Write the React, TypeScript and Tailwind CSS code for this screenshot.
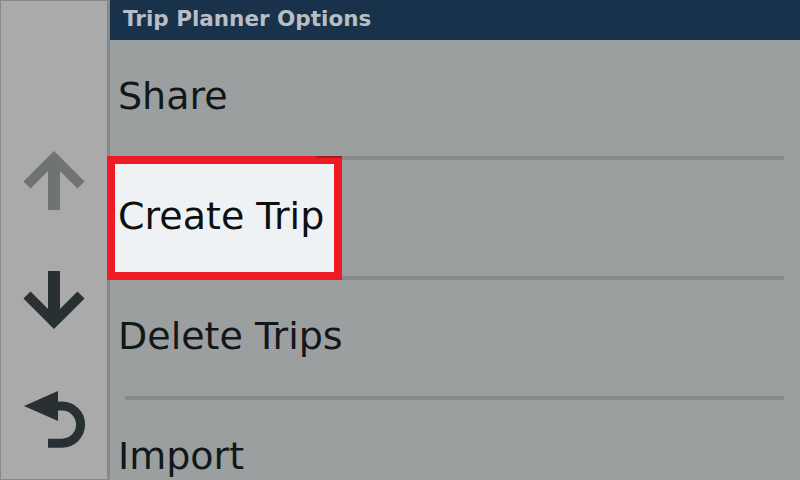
import React from "react";

// --- Sidebar icons (viewBox matches one 120px sidebar row) ---
const UpArrow = () => (
  <svg width="106" height="120" viewBox="1 0 106 120">
    <path d="M27 64 L54 37 L81 64" fill="none" stroke="#6f7372" strokeWidth={10} strokeLinejoin="miter" />
    <path d="M54 40 L54 89" stroke="#6f7372" strokeWidth={12} />
  </svg>
);

const DownArrow = () => (
  <svg width="106" height="120" viewBox="1 0 106 120">
    <path d="M54 30 L54 78" stroke="#283033" strokeWidth={12} />
    <path d="M27 54 L54 81 L81 54" fill="none" stroke="#283033" strokeWidth={10} strokeLinejoin="miter" />
  </svg>
);

const BackArrow = () => (
  <svg width="106" height="120" viewBox="1 0 106 120">
    <polygon points="24,45 58,30 58,60" fill="#283033" />
    <path d="M56 45 L62 45 A18.6 18.6 0 0 1 62 82.2 L48 82.2" fill="none" stroke="#283033" strokeWidth={9} />
  </svg>
);

const items = ["Share", "Create Trip", "Delete Trips", "Import"];

export default function App() {
  return (
    <div
      className="relative w-[800px] h-[480px] overflow-hidden flex bg-[#9c9fa0]"
      style={{ fontFamily: '"DejaVu Sans", Verdana, sans-serif' }}
    >
      {/* --- SIDEBAR --- */}
      <div className="w-[110px] h-full flex flex-col overflow-hidden bg-[#a9aaa9] border-l border-t border-b border-r-[3px] border-[#878888]">
        <div className="h-[120px] shrink-0" />
        <div className="h-[120px] shrink-0">
          <UpArrow />
        </div>
        <div className="h-[120px] shrink-0">
          <DownArrow />
        </div>
        <div className="h-[120px] shrink-0">
          <BackArrow />
        </div>
      </div>

      {/* --- MAIN LIST --- */}
      <div className="flex-1 flex flex-col">
        <div className="h-[40px] shrink-0 bg-[#17324a] flex items-center pl-[13px] pb-[3px]">
          <span className="text-[21.5px] leading-[21px] font-bold text-[#b8bec3]">Trip Planner Options</span>
        </div>
        {items.map((label, i) => (
          <div key={label} className="shrink-0 flex flex-col">
            <div className="h-[116px] flex items-center pl-[8px] pb-[5px]">
              <span className="text-[38px] leading-[38px] text-[#121719]">{label}</span>
            </div>
            {i < items.length - 1 && (
              <div className="h-[4px] ml-[15px] mr-[16px] bg-[#878a8b]" />
            )}
          </div>
        ))}
      </div>

      {/* --- SELECTION BOX --- */}
      <div className="absolute left-[107px] top-[156px] w-[235px] h-[124px] border-[8px] border-[#ed1c24] bg-[#eef2f4] flex items-center pl-[3px] pb-[5px]">
        <span className="text-[38px] leading-[38px] text-[#0d0f10]">Create Trip</span>
      </div>
      <div className="absolute left-[316px] top-[156px] w-[26px] h-[2px] bg-[#a9161d]" />
    </div>
  );
}
